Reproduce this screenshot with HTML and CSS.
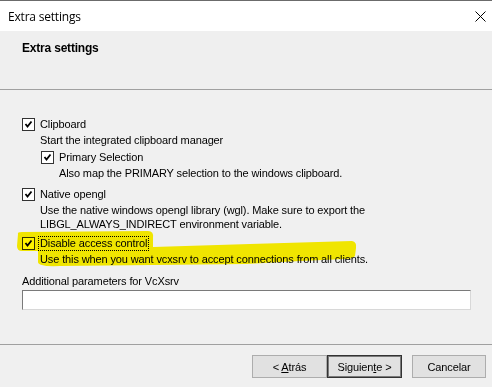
FILE: index.html
```html
<!DOCTYPE html>
<html lang="en">
<head>
    <meta charset="UTF-8">
    <title>Extra settings</title>
    <link rel="stylesheet" href="styles.css">
</head>
<body>
    <div class="window">
        <div class="titlebar">
            <span class="title">Extra settings</span>
            <svg class="close" width="11" height="11" viewBox="0 0 11 11">
                <path d="M0.5 0.5 L10.5 10.5 M10.5 0.5 L0.5 10.5" stroke="#000" stroke-width="1"/>
            </svg>
        </div>

        <div class="header">Extra settings</div>

        <div class="content">
            <div class="opt">
                <span class="box"><svg width="9" height="9" viewBox="0 0 9 9"><path d="M1.5 4 L3.5 6.5 L7.5 1.5" fill="none" stroke="#000" stroke-width="1.8"/></svg></span>
                <span>Clipboard</span>
            </div>
            <div class="desc">Start the integrated clipboard manager</div>

            <div class="sub">
                <div class="opt opt-primary">
                    <span class="box"><svg width="9" height="9" viewBox="0 0 9 9"><path d="M1.5 4 L3.5 6.5 L7.5 1.5" fill="none" stroke="#000" stroke-width="1.8"/></svg></span>
                    <span>Primary Selection</span>
                </div>
                <div class="desc">Also map the PRIMARY selection to the windows clipboard.</div>
            </div>

            <div class="opt opt-gl">
                <span class="box"><svg width="9" height="9" viewBox="0 0 9 9"><path d="M1.5 4 L3.5 6.5 L7.5 1.5" fill="none" stroke="#000" stroke-width="1.8"/></svg></span>
                <span>Native opengl</span>
            </div>
            <div class="desc">Use the native windows opengl library (wgl). Make sure to export the<br>LIBGL_ALWAYS_INDIRECT environment variable.</div>

            <div class="opt opt-access">
                <span class="box"><svg width="9" height="9" viewBox="0 0 9 9"><path d="M1.5 4 L3.5 6.5 L7.5 1.5" fill="none" stroke="#000" stroke-width="1.8"/></svg></span>
                <span class="focus">Disable access control</span>
            </div>
            <div class="desc">Use this when you want vcxsrv to accept connections from all clients.</div>

            <div class="param-label">Additional parameters for VcXsrv</div>
            <div class="field"></div>
        </div>

        <div class="footer">
            <button class="btn"><span>&lt; <u>A</u>trás</span></button>
            <button class="btn btn-default"><span>Siguien<u>t</u>e &gt;</span></button>
            <button class="btn btn-cancel"><span>Cancelar</span></button>
        </div>

        <!-- marker scribble drawn over the screenshot -->
        <svg class="marker" width="492" height="387" viewBox="0 0 492 387">
            <path d="M18 234 Q17 232 22 232 L148 231 Q154 231 153 238 L153 247 L250 244 L352 241 Q357 242 356 248 L355 256 Q353 259 345 259 L300 261 L246 264 L60 266 Q38 267 38 262 L38 251 L22 251 Q17 251 17 246 Z" fill="#fff400"/>
        </svg>
    </div>
</body>
</html>
```

FILE: styles.css
```css
* {
    box-sizing: border-box;
}

body {
    margin: 0;
    background: #f0f0f0;
    font-family: 'Liberation Sans', Arial, sans-serif;
    font-size: 11px;
    letter-spacing: -0.12px;
    color: #000;
}

.window {
    position: relative;
    width: 492px;
    height: 387px;
    display: flex;
    flex-direction: column;
    border-top: 1px solid #6b6b6b;
    background: #f0f0f0;
}

.titlebar {
    height: 30px;
    background: #fff;
    display: flex;
    align-items: center;
    justify-content: space-between;
    padding: 0 6px 0 8px;
}

.title {
    font-family: 'Open Sans', 'Noto Sans', sans-serif;
    font-size: 12px;
    letter-spacing: -0.2px;
}

.header {
    height: 59px;
    padding: 9px 0 0 22px;
    font-weight: bold;
    font-size: 12px;
    line-height: 16px;
    letter-spacing: -0.2px;
    background: #efefef;
    border-bottom: 1px solid #a0a0a0;
}

.content {
    flex: 1;
    padding: 26px 0 0 22px;
}

.opt {
    display: flex;
    align-items: center;
    height: 16px;
}

.box {
    width: 13px;
    height: 13px;
    margin-right: 5px;
    border: 1px solid #333;
    background: #fff;
    display: flex;
    align-items: center;
    justify-content: center;
}

.desc {
    padding-left: 18px;
    line-height: 14px;
    margin-top: 1px;
}

.sub {
    padding-left: 19px;
}

.opt-primary {
    margin-top: 2px;
}

.opt-gl {
    margin-top: 6px;
}

.opt-access {
    margin-top: 4px;
}

.focus {
    border: 1px dotted #000;
    padding: 0 1px;
    margin-left: -2px;
    line-height: 13px;
}

.param-label {
    margin-top: 8px;
    line-height: 14px;
}

.field {
    margin-top: 2px;
    width: 449px;
    height: 20px;
    background: #fff;
    border: 1px solid #7a7a7a;
    border-right-color: #d8d8d8;
    border-bottom-color: #d8d8d8;
}

.footer {
    height: 43px;
    border-top: 1px solid #a0a0a0;
    display: flex;
    justify-content: flex-end;
    padding: 10px 6px 0 0;
}

.btn {
    width: 75px;
    height: 23px;
    background: #e1e1e1;
    border: 1px solid #adadad;
    font-family: 'Liberation Sans', Arial, sans-serif;
    font-size: 11px;
    letter-spacing: -0.12px;
    color: #000;
    padding: 0;
}

.btn-default {
    border: 1px solid #333;
    box-shadow: inset 0 0 0 1px #7a7a7a;
}

.btn-cancel {
    margin-left: 10px;
    width: 74px;
}

.marker {
    position: absolute;
    top: -1px;
    left: 0;
    mix-blend-mode: multiply;
    pointer-events: none;
}
```
